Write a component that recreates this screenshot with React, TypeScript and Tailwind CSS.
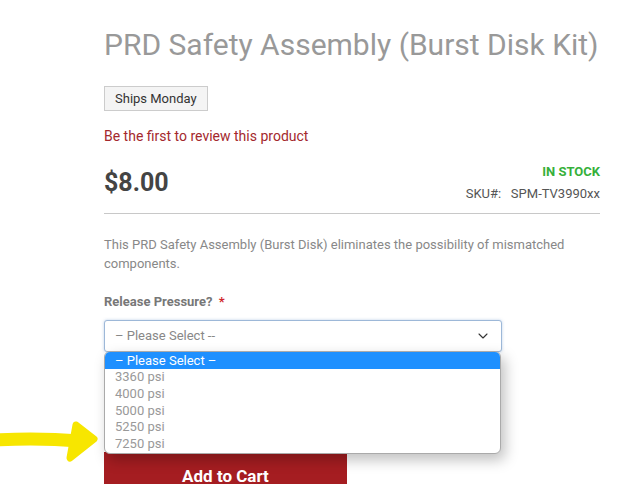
import { ChevronDown } from "lucide-react";

const options = ["3360 psi", "4000 psi", "5000 psi", "5250 psi", "7250 psi"];

export default function App() {
  return (
    <div className="relative h-[484px] w-[625px] overflow-hidden bg-white font-['Roboto',sans-serif]">
      <div className="ml-[104px] w-[496px] pt-[26px]">

        {/* Title */}
        <h1 className="text-[30px] leading-[38px] text-[#999] whitespace-nowrap">
          PRD Safety Assembly (Burst Disk Kit)
        </h1>

        <div className="mt-[22px] inline-block border border-[#ccc] bg-[#f4f4f4] px-[10px] py-[3px] text-[13px] leading-[17px] text-[#333]">
          Ships Monday
        </div>

        <p className="mt-[16px] text-[14px] leading-[18px] text-[#a4282d]">
          Be the first to review this product
        </p>

        {/* Price row */}
        <div className="mt-[11px] flex items-start justify-between border-b border-[#c8c8c8] pb-[11px]">
          <div className="pt-[12px] text-[25px] font-bold leading-[30px] text-[#444]">$8.00</div>
          <div className="pt-[8px] text-right">
            <div className="text-[13px] font-bold leading-[16px] text-[#36b03a]">IN STOCK</div>
            <div className="mt-[6px] text-[13px] leading-[16px] text-[#555]">
              SKU#:&nbsp;&nbsp;&nbsp;SPM-TV3990xx
            </div>
          </div>
        </div>

        <p className="mt-[21px] text-[13px] leading-[19px] text-[#888]">
          This PRD Safety Assembly (Burst Disk) eliminates the possibility of mismatched components.
        </p>

        <div className="mt-[21px] text-[13px] font-bold leading-[16px] text-[#777]">
          Release Pressure? <span className="ml-[3px] text-[#d0262b]">*</span>
        </div>

        {/* Select */}
        <div className="relative mt-[10px] w-[398px]">
          <div className="flex h-[32px] items-center justify-between rounded-[3px] border border-[#9db8d8] bg-white px-[10px] shadow-[0_0_3px_rgba(120,160,210,0.5)]">
            <span className="text-[13px] text-[#888]">– Please Select --</span>
            <ChevronDown className="h-[16px] w-[16px] text-[#333]" strokeWidth={1.6} />
          </div>

          <div className="absolute left-0 top-[31px] z-10 w-[397px] overflow-hidden rounded-[6px] border border-[#aaa] bg-white shadow-[4px_6px_14px_rgba(0,0,0,0.25)]">
            <div className="h-[17px] bg-[#1e90ff] px-[10px] text-[13px] leading-[17px] text-white">– Please Select –</div>
            {options.map((o) => (
              <div key={o} className="h-[16.8px] px-[10px] text-[13px] leading-[16.8px] text-[#999]">
                {o}
              </div>
            ))}
          </div>
        </div>

        <div className="mt-[100px] flex h-[40px] w-[243px] items-start justify-center bg-[#a51d21] pt-[12px] text-[17px] font-bold text-white">
          Add to Cart
        </div>
      </div>

      {/* Yellow annotation arrow */}
      <svg className="absolute left-0 top-[418px]" width="100" height="48" viewBox="0 0 100 48">
        <path d="M-4 22 C30 20 55 21 80 23" stroke="#f7e600" strokeWidth="13" fill="none" strokeLinecap="round" />
        <path d="M76 7 L94 21 L70 40 Z" fill="#f7e600" stroke="#f7e600" strokeWidth="7" strokeLinejoin="round" />
      </svg>
    </div>
  );
}
